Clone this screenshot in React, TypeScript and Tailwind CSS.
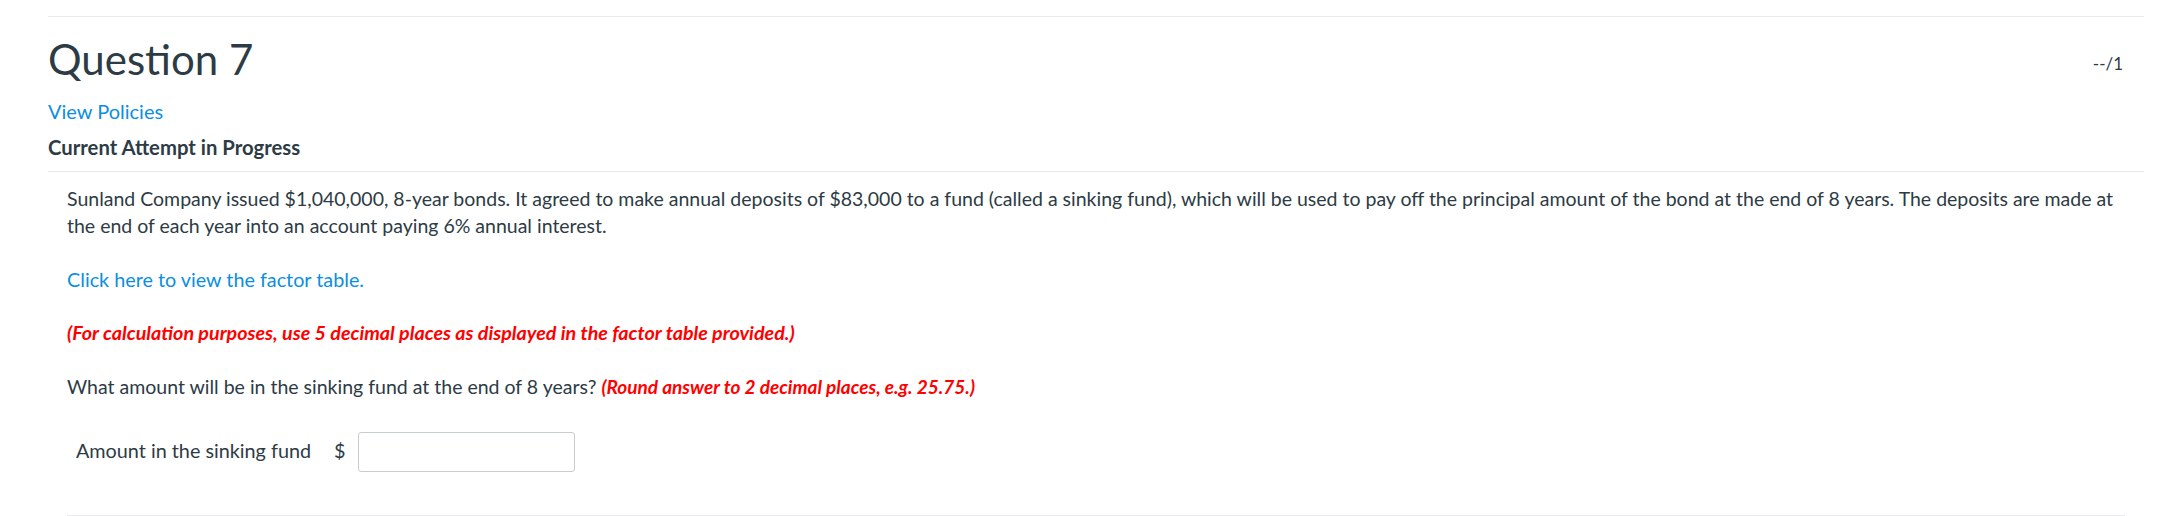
export default function App() {
  return (
    <div className="min-h-[516px] bg-white pt-4 pl-[48px] pr-[34px] font-['Lato','Noto_Sans',sans-serif] text-[#2d3b45]">
      {/* question header */}
      <div className="flex justify-between border-t border-b border-[#e8eaec] pt-[17px] pb-[10px]">
        <div className="flex flex-col items-start">
          <h2 className="text-[42px] leading-[50px] font-normal">Question 7</h2>
          <a className="mt-[14px] text-[20px] leading-[27px] text-[#0b8fe0]">View Policies</a>
          <div className="mt-[9px] text-[20.3px] leading-[27px] font-bold">Current Attempt in Progress</div>
        </div>
        <div className="mt-[18px] pr-[21px] text-[17px] leading-[24px] text-[#2d3b45]">--/1</div>
      </div>

      {/* question body */}
      <div className="mx-[19px] border-b border-[#e8eaec] pt-[13px] pb-[43px] text-[19.5px] leading-[27px]">
        <p>
          Sunland Company issued $1,040,000, 8-year bonds. It agreed to make annual deposits of $83,000 to a fund (called a sinking fund), which will be used to pay off the principal amount of the bond at the end of 8 years. The deposits are made at the end of each year into an account paying 6% annual interest.
        </p>
        <p className="mt-[27px] text-[19.8px]">
          <a className="text-[#0b8fe0]">Click here to view the factor table.</a>
        </p>
        <p className="mt-[26px] text-[19.7px] font-bold italic text-[#ff0000]">
          (For calculation purposes, use 5 decimal places as displayed in the factor table provided.)
        </p>
        <p className="mt-[27px]">
          What amount will be in the sinking fund at the end of 8 years?{" "}
          <span className="text-[19px] font-bold italic text-[#ff0000]">(Round answer to 2 decimal places, e.g. 25.75.)</span>
        </p>
        <div className="mt-[32px] ml-[9px] flex items-center text-[19.8px]">
          <span className="mb-1">Amount in the sinking fund</span>
          <span className="mb-1 ml-[23px]">$</span>
          <input
            type="text"
            className="ml-[12px] h-[40px] w-[217px] rounded-[3px] border border-[#c7cdd1] bg-white px-2 text-[18px] outline-none"
          />
        </div>
      </div>
    </div>
  );
}
